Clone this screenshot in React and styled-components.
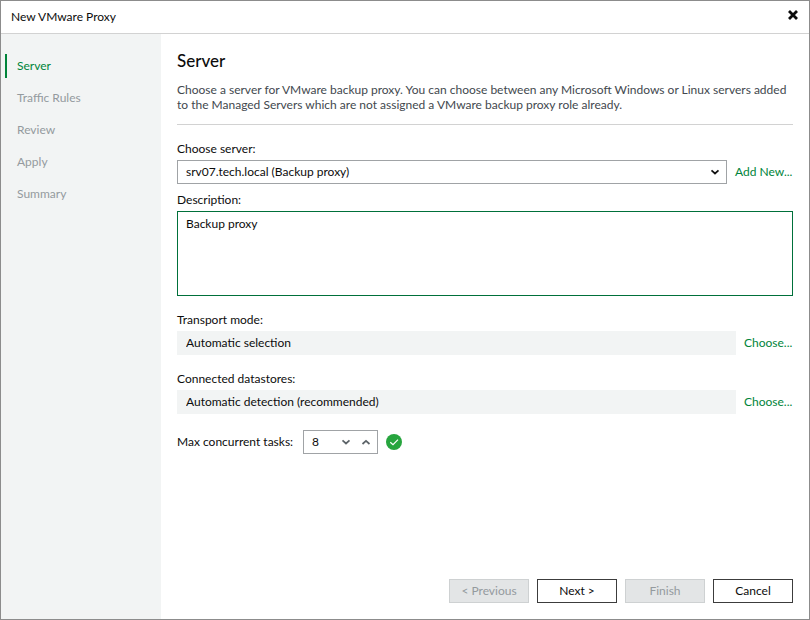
import React, { useState } from 'react';
import styled, { createGlobalStyle } from 'styled-components';

const GlobalStyle = createGlobalStyle`
  *, *::before, *::after {
    box-sizing: border-box;
  }

  body {
    margin: 0;
    background: #ffffff;
  }

  body, button, input, select, textarea {
    font-family: Lato, "Open Sans", sans-serif;
    font-size: 12px;
    line-height: 16px;
    color: #0c0c0c;
  }
`;

const Dialog = styled.div`
  display: flex;
  flex-direction: column;
  min-height: 100vh;
  border: 1px solid #8c8c8c;
`;

const TitleBar = styled.header`
  display: flex;
  align-items: center;
  justify-content: space-between;
  height: 33px;
  padding: 0 10px;
  border-bottom: 1px solid #d2d2d2;
`;

const CloseButton = styled.button`
  display: flex;
  padding: 0 0 4px;
  border: none;
  background: transparent;
  cursor: pointer;
`;

const Body = styled.div`
  display: flex;
  flex: 1;
`;

const Sidebar = styled.nav`
  flex: 0 0 160px;
  padding: 20px 4px;
  background: #f2f4f4;
`;

const StepList = styled.ol`
  display: flex;
  flex-direction: column;
  gap: 8px;
  margin: 0;
  padding: 0;
  list-style: none;
`;

const Step = styled.a`
  display: block;
  padding: 4px 10px;
  border-left: 2px solid ${({ $active }) => ($active ? '#00843a' : 'transparent')};
  color: ${({ $active }) => ($active ? '#00843a' : '#949a9e')};
  text-decoration: none;
`;

const Main = styled.main`
  display: flex;
  flex: 1;
  flex-direction: column;
  min-width: 0;
  padding: 16px;
`;

const PageHeader = styled.div`
  margin-bottom: 16px;
  padding-bottom: 12px;
  border-bottom: 1px solid #d2d2d2;
`;

const Heading = styled.h1`
  margin: 0 0 10px;
  font-size: 17px;
  font-weight: 500;
  line-height: 22px;
`;

const Intro = styled.p`
  margin: 0;
  line-height: 15px;
  color: #42484e;
`;

const Form = styled.form`
  display: flex;
  flex: 1;
  flex-direction: column;
`;

const Field = styled.div`
  display: flex;
  flex-direction: column;
  gap: 3px;
  margin-bottom: ${({ $gap }) => $gap || 16}px;
`;

const FieldRow = styled.div`
  display: flex;
  align-items: center;
  gap: 8px;
`;

const SelectBox = styled.div`
  position: relative;
  flex: 1;
  min-width: 0;

  svg {
    position: absolute;
    top: 8px;
    right: 7px;
    pointer-events: none;
  }
`;

const Select = styled.select`
  display: block;
  width: 100%;
  height: 24px;
  padding: 0 24px 0 8px;
  border: 1px solid #a0a3a6;
  border-radius: 0;
  background: #ffffff;
  appearance: none;
  outline: none;
`;

const TextArea = styled.textarea`
  display: block;
  width: 100%;
  height: 85px;
  padding: 4px 8px;
  border: 1px solid #00703a;
  border-radius: 0;
  resize: none;
  outline: none;
`;

const ReadOnlyInput = styled.input`
  flex: 1;
  min-width: 0;
  height: 24px;
  padding: 0 8px 2px;
  border: 1px solid #f2f4f4;
  background: #f2f4f4;
  outline: none;
`;

const LinkButton = styled.a`
  flex: 0 0 ${({ $width }) => $width}px;
  color: #00843a;
  text-decoration: none;
  white-space: nowrap;
`;

const TaskLabel = styled.label`
  flex: 0 0 118px;
  white-space: nowrap;
`;

const Spinner = styled.div`
  display: flex;
  width: 75px;
  height: 24px;
  padding-right: 1px;
  border: 1px solid #a0a3a6;
`;

const SpinnerInput = styled.input`
  flex: 1;
  width: 0;
  min-width: 0;
  padding: 0 0 0 8px;
  border: none;
  background: transparent;
  outline: none;
`;

const SpinnerButton = styled.button`
  display: flex;
  flex: 0 0 20px;
  align-items: center;
  justify-content: center;
  padding: 0;
  border: none;
  background: transparent;
`;

const Footer = styled.footer`
  display: flex;
  justify-content: flex-end;
  gap: 8px;
  margin-top: auto;
`;

const Button = styled.button`
  width: 80px;
  height: 24px;
  padding: 0;
  border: 1px solid #3c3c3c;
  background: #ffffff;

  &:disabled {
    border-color: #ced1d2;
    background: #e3e5e6;
    color: #949a9e;
  }
`;

const Chevron = ({ up, color = '#111111' }) => (
  <svg width="10" height="8" viewBox="0 0 10 8" aria-hidden="true">
    <path
      d={up ? 'M1.5 6L5 2.8L8.5 6' : 'M1.5 2.3L5 5.5L8.5 2.3'}
      fill="none"
      stroke={color}
      strokeWidth="1.7"
    />
  </svg>
);

const CloseIcon = () => (
  <svg width="12" height="12" viewBox="0 0 12 12" aria-hidden="true">
    <path d="M2 2L10 10M10 2L2 10" stroke="#0c0c0c" strokeWidth="2.8" />
  </svg>
);

const ValidIcon = () => (
  <svg width="16" height="16" viewBox="0 0 16 16" role="img" aria-label="Valid">
    <circle cx="8" cy="8" r="8" fill="#27a53e" />
    <path d="M4.3 8.2L7 10.7L12 5.6" fill="none" stroke="#ffffff" strokeWidth="1.2" />
  </svg>
);

const steps = ['Server', 'Traffic Rules', 'Review', 'Apply', 'Summary'];

const App = () => {
  const [activeStep, setActiveStep] = useState('Server');
  const [description, setDescription] = useState('Backup proxy');
  const [tasks, setTasks] = useState(8);

  return (
    <>
      <GlobalStyle />
      <Dialog role="dialog" aria-labelledby="dialog-title">
        <TitleBar>
          <span id="dialog-title">New VMware Proxy</span>
          <CloseButton type="button" aria-label="Close"><CloseIcon /></CloseButton>
        </TitleBar>
        <Body>
          <Sidebar>
            <StepList>
              {steps.map((step) => (
                <li key={step}>
                  <Step href="#" $active={step === activeStep} onClick={() => setActiveStep(step)}>
                    {step}
                  </Step>
                </li>
              ))}
            </StepList>
          </Sidebar>
          <Main>
            <PageHeader>
              <Heading>Server</Heading>
              <Intro>
                Choose a server for VMware backup proxy. You can choose between any Microsoft Windows or Linux
                servers added to the Managed Servers which are not assigned a VMware backup proxy role already.
              </Intro>
            </PageHeader>
            <Form onSubmit={(e) => e.preventDefault()}>
              <Field $gap={8}>
                <label htmlFor="server">Choose server:</label>
                <FieldRow>
                  <SelectBox>
                    <Select id="server">
                      <option>srv07.tech.local (Backup proxy)</option>
                    </Select>
                    <Chevron />
                  </SelectBox>
                  <LinkButton href="#" $width={58}>Add New...</LinkButton>
                </FieldRow>
              </Field>
              <Field>
                <label htmlFor="description">Description:</label>
                <TextArea
                  id="description"
                  value={description}
                  onChange={(e) => setDescription(e.target.value)}
                />
              </Field>
              <Field>
                <label htmlFor="transport">Transport mode:</label>
                <FieldRow>
                  <ReadOnlyInput id="transport" value="Automatic selection" readOnly />
                  <LinkButton href="#" $width={49}>Choose...</LinkButton>
                </FieldRow>
              </Field>
              <Field>
                <label htmlFor="datastores">Connected datastores:</label>
                <FieldRow>
                  <ReadOnlyInput id="datastores" value="Automatic detection (recommended)" readOnly />
                  <LinkButton href="#" $width={49}>Choose...</LinkButton>
                </FieldRow>
              </Field>
              <FieldRow>
                <TaskLabel htmlFor="tasks">Max concurrent tasks:</TaskLabel>
                <Spinner>
                  <SpinnerInput
                    id="tasks"
                    inputMode="numeric"
                    value={tasks}
                    onChange={(e) => setTasks(Number(e.target.value) || 1)}
                  />
                  <SpinnerButton type="button" aria-label="Decrease" onClick={() => setTasks(Math.max(1, tasks - 1))}>
                    <Chevron color="#5c6368" />
                  </SpinnerButton>
                  <SpinnerButton type="button" aria-label="Increase" onClick={() => setTasks(tasks + 1)}>
                    <Chevron up color="#5c6368" />
                  </SpinnerButton>
                </Spinner>
                <ValidIcon />
              </FieldRow>
              <Footer>
                <Button type="button" disabled>&lt; Previous</Button>
                <Button type="submit">Next &gt;</Button>
                <Button type="button" disabled>Finish</Button>
                <Button type="button">Cancel</Button>
              </Footer>
            </Form>
          </Main>
        </Body>
      </Dialog>
    </>
  );
};

export default App;
